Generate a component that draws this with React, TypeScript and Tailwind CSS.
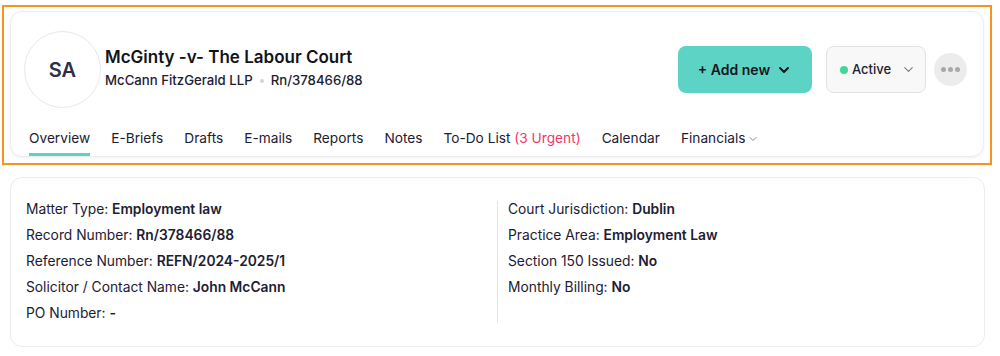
import { ChevronDown } from 'lucide-react';

const tabs = ['Overview', 'E-Briefs', 'Drafts', 'E-mails', 'Reports', 'Notes'];

const leftRows = [
  { label: 'Matter Type', value: 'Employment law' },
  { label: 'Record Number', value: 'Rn/378466/88' },
  { label: 'Reference Number', value: 'REFN/2024-2025/1' },
  { label: 'Solicitor / Contact Name', value: 'John McCann' },
  { label: 'PO Number', value: '-' },
];

const rightRows = [
  { label: 'Court Jurisdiction', value: 'Dublin' },
  { label: 'Practice Area', value: 'Employment Law' },
  { label: 'Section 150 Issued', value: 'No' },
  { label: 'Monthly Billing', value: 'No' },
];

function Row({ label, value }: { label: string; value: string }) {
  return (
    <div className="h-[26px] flex items-center text-[13.8px] text-[#1c2033]">
      <span>{label}:&nbsp;</span>
      <span className="font-semibold">{value}</span>
    </div>
  );
}

export default function App() {
  return (
    <div className="w-[1000px] h-[356px] bg-white pt-[5px] px-[2px]" style={{ fontFamily: 'Inter, "Noto Sans", sans-serif' }}>
      {/* Header */}
      <div className="w-[990px] h-[160px] border-2 border-[#f7931e] pt-[4px] pl-[6px]">
        <div className="w-[974px] h-[146px] rounded-xl border border-[#ececec] shadow-[0_1px_3px_rgba(0,0,0,0.06)] bg-white flex flex-col">
          <div className="flex items-center pt-[19px] pl-[13px] pr-[16px]">
            <div className="w-[77px] h-[77px] rounded-full border border-[#e6e8ee] flex items-center justify-center text-[20px] font-semibold text-[#2b3047]">
              SA
            </div>
            <div className="ml-[4px] -mt-[3px]">
              <div className="text-[17px] font-semibold text-[#111318] leading-6">McGinty -v- The Labour Court</div>
              <div className="flex items-center text-[13.2px] font-medium text-[#1c2033] mt-[2px]">
                <span>McCann FitzGerald LLP</span>
                <span className="w-[4px] h-[4px] rounded-full bg-[#d0d4dc] mx-[7px]" />
                <span>Rn/378466/88</span>
              </div>
            </div>
            <div className="ml-auto flex items-center">
              <button className="w-[134px] h-[47px] rounded-lg bg-[#5dd3c6] flex items-center justify-center gap-[6px] text-[14px] font-semibold text-[#15171c]">
                + Add new
                <ChevronDown size={16} strokeWidth={3} />
              </button>
              <button className="ml-[14px] w-[100px] h-[47px] rounded-lg bg-[#f8f8f8] border border-[#e2e2e2] flex items-center pl-[13px] text-[13px] font-medium text-[#1c2033]">
                <span className="w-[8px] h-[8px] rounded-full bg-[#45d49c] mr-[4px]" />
                Active
                <ChevronDown size={15} strokeWidth={1.75} className="ml-[10px] text-[#777]" />
              </button>
              <button className="ml-[8px] w-[33px] h-[33px] rounded-full bg-[#ececec] flex items-center justify-center gap-[2px]">
                <span className="w-[5px] h-[5px] rounded-full bg-[#a8a8a8]" />
                <span className="w-[5px] h-[5px] rounded-full bg-[#a8a8a8]" />
                <span className="w-[5px] h-[5px] rounded-full bg-[#a8a8a8]" />
              </button>
            </div>
          </div>

          {/* Tabs */}
          <div className="mt-auto flex items-end pl-[18px] gap-[21px] text-[13.7px] text-[#1c2033]">
            {tabs.map((t, i) => (
              <div
                key={t}
                className={`pb-[4px] ${i === 0 ? 'border-b-[3px] border-[#5dd3c6]' : 'border-b-[3px] border-transparent'}`}
              >
                {t}
              </div>
            ))}
            <div className="pb-[4px] border-b-[3px] border-transparent">
              To-Do List <span className="text-[#f0386b]">(3 Urgent)</span>
            </div>
            <div className="pb-[4px] border-b-[3px] border-transparent">Calendar</div>
            <div className="pb-[4px] border-b-[3px] border-transparent flex items-center">
              Financials
              <ChevronDown size={12} strokeWidth={1.5} className="ml-[1px] text-[#666]" />
            </div>
          </div>
        </div>
      </div>

      {/* Details */}
      <div className="mt-[12px] ml-[8px] w-[975px] h-[170px] rounded-xl border border-[#ececec] bg-white flex pt-[18px] pl-[15px]">
        <div className="w-[471px]">
          {leftRows.map((r) => (
            <Row key={r.label} {...r} />
          ))}
        </div>
        <div className="w-[1px] h-[122px] bg-[#e4e4e4] mt-[5px]" />
        <div className="pl-[10px]">
          {rightRows.map((r) => (
            <Row key={r.label} {...r} />
          ))}
        </div>
      </div>
    </div>
  );
}
